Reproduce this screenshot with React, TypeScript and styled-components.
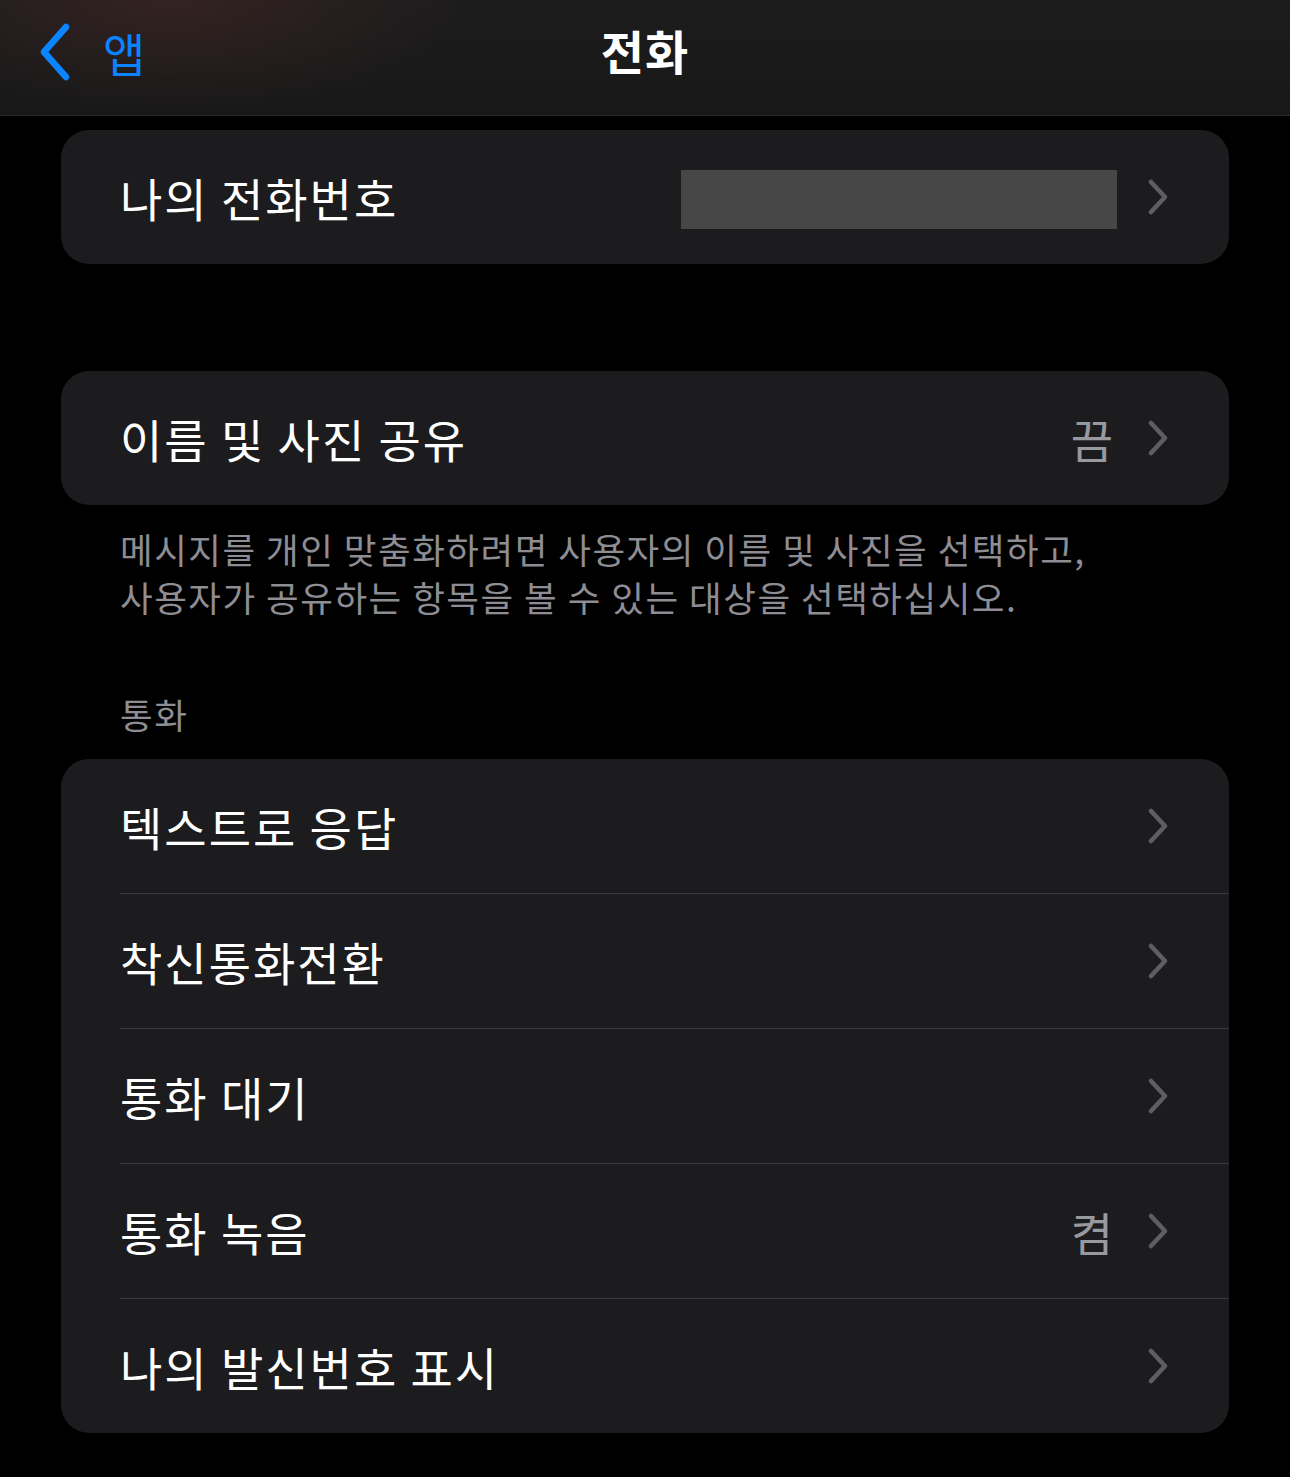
import styled, { createGlobalStyle } from 'styled-components';

const GlobalStyle = createGlobalStyle`
  html, body {
    margin: 0;
    padding: 0;
    background: #000;
  }
  body {
    font-family: "Noto Sans CJK KR", "Noto Sans", sans-serif;
    -webkit-font-smoothing: antialiased;
  }
`;

type RowItem = {
  label: string;
  value?: string;
  redacted?: boolean;
};

const callRows: RowItem[] = [
  { label: '텍스트로 응답' },
  { label: '착신통화전환' },
  { label: '통화 대기' },
  { label: '통화 녹음', value: '켬' },
  { label: '나의 발신번호 표시' },
];

const Chevron = () => (
  <S.ChevronSvg viewBox="0 0 22 38">
    <path
      d="M4 4 L18 19 L4 34"
      fill="none"
      stroke="#5d5d62"
      strokeWidth="4.6"
      strokeLinecap="round"
      strokeLinejoin="round"
    />
  </S.ChevronSvg>
);

const SettingsRow = ({ label, value, redacted }: RowItem) => (
  <S.Row>
    <S.RowInner>
      <S.Label>{label}</S.Label>
      <S.Trail>
        {redacted && <S.Redacted />}
        {value && <S.Value>{value}</S.Value>}
        <Chevron />
      </S.Trail>
    </S.RowInner>
  </S.Row>
);

const App = () => {
  return (
    <>
      <GlobalStyle />
      <S.Page>
        <S.Header>
          <S.Back>
            <S.BackSvg viewBox="0 0 36 60">
              <path
                d="M29 5 L7 30 L29 55"
                fill="none"
                stroke="#0a84ff"
                strokeWidth="6.5"
                strokeLinecap="round"
                strokeLinejoin="round"
              />
            </S.BackSvg>
            <S.BackText>앱</S.BackText>
          </S.Back>
          <S.Title>전화</S.Title>
          <span />
        </S.Header>

        <S.Content>
          <S.Card>
            <SettingsRow label="나의 전화번호" redacted />
          </S.Card>

          <S.Card $top={107}>
            <SettingsRow label="이름 및 사진 공유" value="끔" />
          </S.Card>
          <S.Footer>
            메시지를 개인 맞춤화하려면 사용자의 이름 및 사진을 선택하고,
            <br />
            사용자가 공유하는 항목을 볼 수 있는 대상을 선택하십시오.
          </S.Footer>

          <S.SectionTitle>통화</S.SectionTitle>
          <S.Card>
            {callRows.map((row) => (
              <SettingsRow key={row.label} {...row} />
            ))}
          </S.Card>
        </S.Content>
      </S.Page>
    </>
  );
};

const S = {
  Page: styled.div`
    width: 1290px;
    min-height: 1477px;
    background: #000;
    color: #fff;
  `,
  Header: styled.header`
    height: 116px;
    display: grid;
    grid-template-columns: 1fr auto 1fr;
    align-items: center;
    background:
      radial-gradient(ellipse 420px 160px at 170px 0px, rgba(70, 40, 36, 0.55), rgba(0, 0, 0, 0) 70%),
      linear-gradient(180deg, #1d1c1d 0%, #181818 100%);
    border-bottom: 1px solid #2c2c2e;
    box-sizing: border-box;
  `,
  Back: styled.div`
    display: flex;
    align-items: center;
    gap: 30px;
    padding-left: 37px;
    margin-top: -12px;
  `,
  BackSvg: styled.svg`
    width: 36px;
    height: 60px;
  `,
  BackText: styled.span`
    font-size: 46px;
    color: #0a84ff;
    line-height: 1;
    letter-spacing: 1px;
  `,
  Title: styled.h1`
    margin: -16px 0 0;
    font-size: 47px;
    font-weight: 700;
    color: #fff;
    line-height: 1;
    letter-spacing: 1px;
  `,
  Content: styled.main`
    display: flex;
    flex-direction: column;
    padding: 14px 61px 40px;
  `,
  Card: styled.section<{ $top?: number }>`
    margin-top: ${(p) => p.$top ?? 0}px;
    background: #1c1c1e;
    border-radius: 28px;
    overflow: hidden;
  `,
  Row: styled.div`
    padding-left: 59px;
    & + & > div {
      border-top: 1px solid #3a3a3c;
    }
  `,
  RowInner: styled.div`
    height: 134px;
    display: flex;
    align-items: center;
    justify-content: space-between;
    padding-right: 60px;
  `,
  Label: styled.span`
    font-size: 46px;
    color: #fff;
    line-height: 1;
    letter-spacing: 2px;
  `,
  Trail: styled.div`
    display: flex;
    align-items: center;
    gap: 30px;
  `,
  Value: styled.span`
    font-size: 46px;
    color: #98989f;
    line-height: 1;
    margin-right: 4px;
  `,
  Redacted: styled.div`
    width: 436px;
    height: 59px;
    margin-top: 4px;
    background: #474747;
  `,
  ChevronSvg: styled.svg`
    width: 22px;
    height: 38px;
  `,
  Footer: styled.p`
    margin: 20px 0 0;
    padding-left: 59px;
    font-size: 35.5px;
    line-height: 48px;
    letter-spacing: 1.5px;
    color: #8d8d93;
  `,
  SectionTitle: styled.h2`
    margin: 69px 0 21px;
    padding-left: 59px;
    font-size: 35.5px;
    font-weight: 400;
    line-height: 48px;
    letter-spacing: 1.5px;
    color: #8d8d93;
  `,
};

export default App;
